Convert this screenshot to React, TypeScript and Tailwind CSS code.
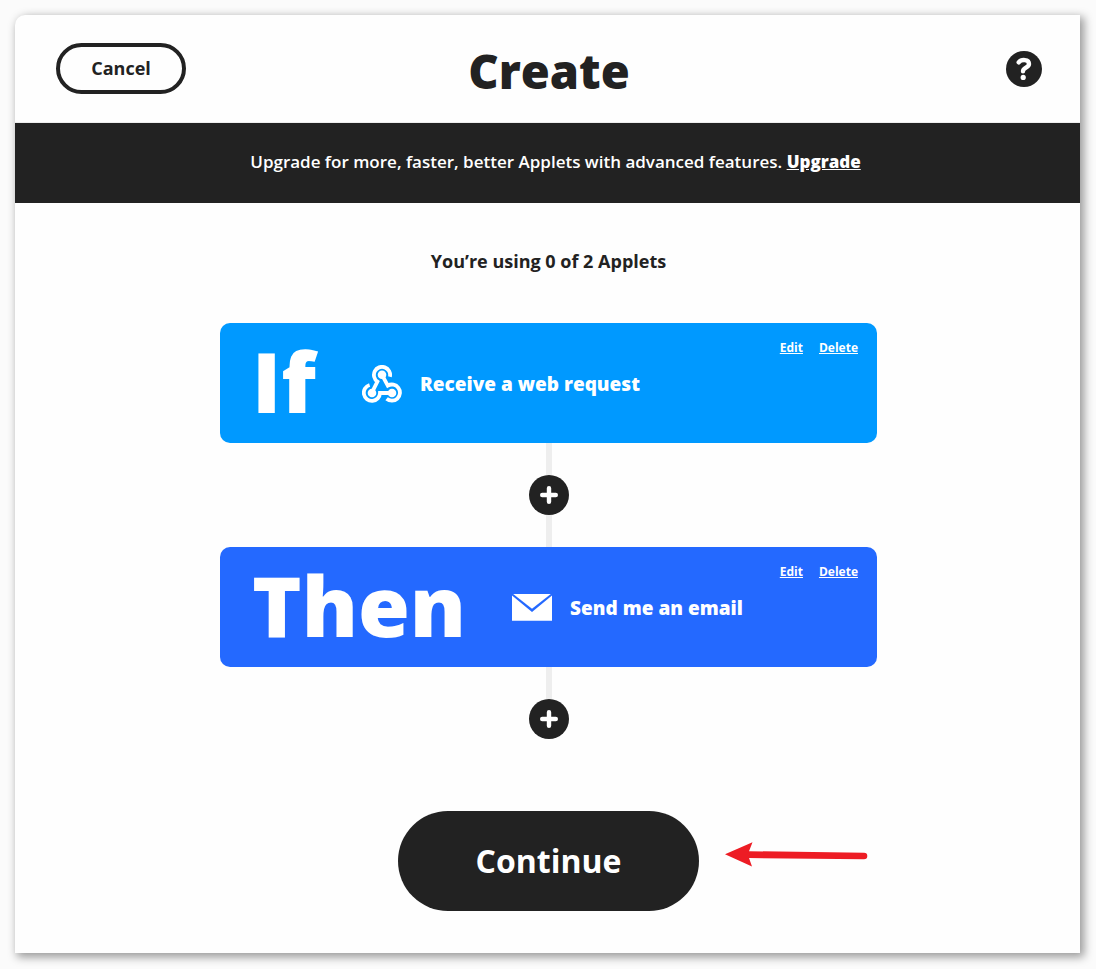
import React from 'react';

function WebhookIcon() {
  return (
    <svg width="40" height="38" viewBox="0 0 40 38" fill="none" stroke="#fff" strokeWidth="3.8" aria-hidden="true">
      <path d="M27.9 11.8A8.1 8.1 0 1 0 15.4 16.6L10 27.4" />
      <path d="M20 9.8L25.8 20.6A8.1 8.1 0 1 1 24.6 33.8" />
      <path d="M7.6 20A8.1 8.1 0 1 0 18 28H30" />
      <g fill="#fff" stroke="none">
        <circle cx="20" cy="9.8" r="4.3" />
        <circle cx="10" cy="28" r="4.3" />
        <circle cx="30" cy="28" r="4.3" />
      </g>
    </svg>
  );
}

function MailIcon() {
  return (
    <svg width="40" height="28" viewBox="0 0 40 28" fill="#fff" aria-hidden="true">
      <path d="M1.2 0H38.8L20 14.8Z" />
      <path d="M0 1.6L20 18L40 1.6V26.7H0Z" />
    </svg>
  );
}

function HelpIcon() {
  return (
    <svg width="36" height="36" viewBox="0 0 36 36" aria-hidden="true">
      <circle cx="18" cy="18" r="18" fill="#222" />
      <path d="M12.7 11.4C15.4 8 23 8.2 23 13C23 16.8 17 16.6 17 20.2" fill="none" stroke="#fff" strokeWidth="4.4" strokeLinecap="round" />
      <circle cx="17.2" cy="26.4" r="2.6" fill="#fff" />
    </svg>
  );
}

type StepProps = {
  label: string;
  title: string;
  icon: React.ReactNode;
  className: string;
};

function Step({ label, title, icon, className }: StepProps) {
  return (
    <section className={`relative flex h-30 w-full items-center gap-[46px] rounded-[10px] pl-8 text-white ${className}`}>
      <h2 className="pb-1 text-[84px] leading-[112px] font-extrabold">{label}</h2>
      <div className="flex items-center gap-[18px] pt-0.5">
        {icon}
        <p className="text-[19px] leading-7 font-extrabold">{title}</p>
      </div>
      <div className="absolute top-4 right-[19px] flex gap-4 text-xs leading-[18px] font-bold">
        <a href="#edit" className="underline">Edit</a>
        <a href="#delete" className="underline">Delete</a>
      </div>
    </section>
  );
}

function AddStep({ last = false }: { last?: boolean }) {
  return (
    <div className="flex flex-col items-center">
      <div className="h-8 w-1.5 bg-[#eee]" />
      <button type="button" aria-label="Add step" className="flex size-10 items-center justify-center rounded-full bg-[#222]">
        <svg width="18" height="18" viewBox="0 0 18 18" stroke="#fff" strokeWidth="4.4" strokeLinecap="round" aria-hidden="true">
          <path d="M9 2.2V15.8M2.2 9H15.8" />
        </svg>
      </button>
      {!last && <div className="h-8 w-1.5 bg-[#eee]" />}
    </div>
  );
}

export default function App() {
  return (
    <div className="min-h-screen bg-[#fbfbfb] p-[15px] pr-4 pb-4 font-['Open_Sans','Noto_Sans',sans-serif] text-[#222]">
      <div className="overflow-hidden rounded-tl-[10px] bg-[#fefefe] pb-[42px] shadow-[3px_3px_10px_1px_rgba(0,0,0,0.4)]">
        <header className="grid h-[108px] grid-cols-[1fr_auto_1fr] items-center border-b border-[#eee] pr-[38px] pl-[41px]">
          <button type="button" className="h-[51px] w-[130px] justify-self-start rounded-full border-4 border-[#222] pb-0.5 text-lg leading-6 font-bold">
            Cancel
          </button>
          <h1 className="pt-1 text-[47px] leading-[64px] font-extrabold">Create</h1>
          <button type="button" aria-label="Help" className="justify-self-end">
            <HelpIcon />
          </button>
        </header>

        <div className="flex min-h-20 items-center justify-center bg-[#222] pb-0.5 pl-4 text-[17px] font-semibold text-white">
          <p>
            Upgrade for more, faster, better Applets with advanced features.{' '}
            <a href="#upgrade" className="font-extrabold underline">Upgrade</a>
          </p>
        </div>

        <main className="mx-auto flex w-full max-w-[659px] flex-col items-center pt-11 pl-0.5">
          <p className="text-lg leading-7 font-bold">You’re using 0 of 2 Applets</p>
          <div className="mt-12 w-full">
            <Step label="If" title="Receive a web request" icon={<WebhookIcon />} className="bg-[#0099ff]" />
            <AddStep />
            <Step label="Then" title="Send me an email" icon={<MailIcon />} className="bg-[#2469ff]" />
            <AddStep last />
          </div>
          <div className="relative mt-[72px]">
            <button type="button" className="h-[100px] w-[301px] rounded-full bg-[#222] text-[32px] font-bold text-white">
              Continue
            </button>
            <svg className="absolute top-[30px] left-[327px]" width="144" height="28" viewBox="0 0 144 28" fill="#ed1c24" aria-hidden="true">
              <path d="M0 13.2L27.5 1.2L24 10.2L139 11.7A3.2 3.2 0 0 1 139 18.3L24 17L27 25.5Z" />
            </svg>
          </div>
        </main>
      </div>
    </div>
  );
}
